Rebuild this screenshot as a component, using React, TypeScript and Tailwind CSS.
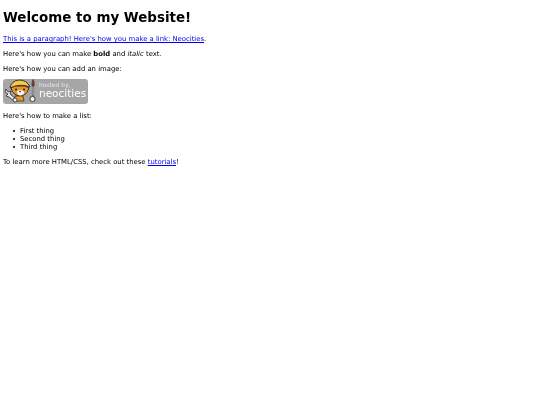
import React from "react";

const Badge = () => (
  <div className="relative w-[85px] h-[25px] rounded-[3px] bg-[#a6a6a6] overflow-hidden">
    <svg width="36" height="25" viewBox="0 0 36 25" className="absolute left-0 top-0">
      {/* wrench, behind the cat */}
      <path d="M3 10 L5 13 L8 12 L7 15 L13 20 L11 22 L6 18 L3 17 L5 15 L2 13 Z" fill="#e8e8e8" stroke="#2a2a2a" strokeWidth="0.8" />
      {/* hard hat and face */}
      <path d="M8 9 Q9 14 13 16 Q17 18 21 16 Q25 14 26 9 L22 7 L12 7 Z" fill="#e9962f" stroke="#2a2a2a" strokeWidth="0.9" />
      <path d="M7 9 Q8 2 16 1 Q24 1 27 8 Q17 4 7 9 Z" fill="#f5c945" stroke="#2a2a2a" strokeWidth="0.9" />
      <path d="M14 12 Q17 10 21 12 Q22 16 17 17 Q14 16 14 12 Z" fill="#fbf3e0" />
      <circle cx="13" cy="10.5" r="1" fill="#1c1c1c" />
      <circle cx="21" cy="10.5" r="1" fill="#1c1c1c" />
      <circle cx="17" cy="12.5" r="0.8" fill="#1c1c1c" />
      {/* body and paw */}
      <path d="M12 17 L20 17 L21 22 L12 22 Z" fill="#e9962f" stroke="#2a2a2a" strokeWidth="0.7" />
      <circle cx="12" cy="21" r="2" fill="#fbf3e0" stroke="#2a2a2a" strokeWidth="0.8" />
      {/* paint brush */}
      <path d="M30 0.5 Q32 3 31 7 L29 7 Q28.5 3 30 0.5 Z" fill="#a8372a" stroke="#2a2a2a" strokeWidth="0.6" />
      <rect x="29.2" y="7" width="1.6" height="10" fill="#e8e8e8" stroke="#2a2a2a" strokeWidth="0.5" />
      <circle cx="29.5" cy="20" r="2.6" fill="#fbf3e0" stroke="#2a2a2a" strokeWidth="0.9" />
    </svg>
    <div className="absolute left-[36px] top-[2px] text-[6px] leading-[8px] text-[#e6e6e6]">hosted by,</div>
    <div className="absolute left-[36px] top-[8px] text-[10.5px] leading-[13px] text-white">neocities</div>
  </div>
);

export default function App() {
  return (
    <div className="min-h-[405px] bg-white pl-[3px] pt-[10px] text-black text-[6.85px] leading-[8px] font-['DejaVu_Sans',sans-serif] blur-[0.3px]">
      <h1 className="text-[13.44px] leading-[15px] font-bold mb-[10px]">Welcome to my Website!</h1>
      <p className="mb-[7px]">
        <a href="#" className="text-[#0000ee] underline">This is a paragraph! Here's how you make a link: Neocities</a>.
      </p>
      <p className="mb-[7px]">
        Here's how you can make <strong>bold</strong> and <em>italic</em> text.
      </p>
      <p className="mb-[6px]">Here's how you can add an image:</p>
      <Badge />
      <p className="mt-[8px] mb-[7px]">Here's how to make a list:</p>
      <ul className="pl-[10px] mb-[7px]">
        <li className="flex items-center gap-[5px]"><span className="w-[2px] h-[2px] rounded-full bg-black" />First thing</li>
        <li className="flex items-center gap-[5px]"><span className="w-[2px] h-[2px] rounded-full bg-black" />Second thing</li>
        <li className="flex items-center gap-[5px]"><span className="w-[2px] h-[2px] rounded-full bg-black" />Third thing</li>
      </ul>
      <p>
        To learn more HTML/CSS, check out these <a href="#" className="text-[#0000ee] underline">tutorials</a>!
      </p>
    </div>
  );
}
